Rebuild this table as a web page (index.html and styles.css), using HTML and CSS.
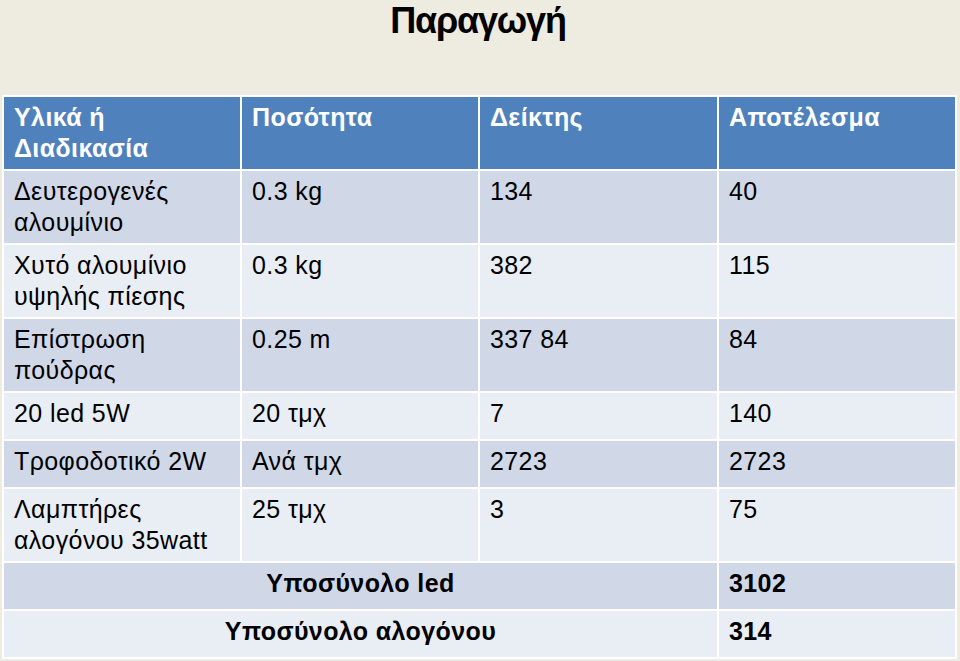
FILE: index.html
```html
<!DOCTYPE html>
<html lang="el">
<head>
<meta charset="utf-8">
<title>Παραγωγή</title>
<link rel="stylesheet" href="styles.css">
</head>
<body>
<div class="slide">
  <h1 class="title">Παραγωγή</h1>
  <table class="grid">
    <colgroup>
      <col class="c1"><col class="c2"><col class="c3"><col class="c4">
    </colgroup>
    <thead>
      <tr class="r-head">
        <th>Υλικά ή Διαδικασία</th>
        <th>Ποσότητα</th>
        <th>Δείκτης</th>
        <th>Αποτέλεσμα</th>
      </tr>
    </thead>
    <tbody>
      <tr class="dark r-tall">
        <td>Δευτερογενές αλουμίνιο</td><td>0.3 kg</td><td>134</td><td>40</td>
      </tr>
      <tr class="light r-tall">
        <td>Χυτό αλουμίνιο υψηλής πίεσης</td><td>0.3 kg</td><td>382</td><td>115</td>
      </tr>
      <tr class="dark r-tall">
        <td>Επίστρωση πούδρας</td><td>0.25 m</td><td>337 84</td><td>84</td>
      </tr>
      <tr class="light r-short">
        <td>20 led 5W</td><td>20 τμχ</td><td>7</td><td>140</td>
      </tr>
      <tr class="dark r-short">
        <td>Τροφοδοτικό 2W</td><td>Ανά τμχ</td><td>2723</td><td>2723</td>
      </tr>
      <tr class="light r-tall">
        <td>Λαμπτήρες αλογόνου 35watt</td><td>25 τμχ</td><td>3</td><td>75</td>
      </tr>
      <tr class="dark r-short total">
        <td colspan="3" class="center">Υποσύνολο led</td><td>3102</td>
      </tr>
      <tr class="light r-short total">
        <td colspan="3" class="center">Υποσύνολο αλογόνου</td><td>314</td>
      </tr>
    </tbody>
  </table>
</div>
</body>
</html>
```

FILE: styles.css
```css
html, body {
  margin: 0;
  padding: 0;
}
body {
  background: #eeebe0;
  font-family: "Liberation Sans", Arial, sans-serif;
  color: #000;
}
.slide {
  width: 960px;
  height: 661px;
  overflow: hidden;
  position: relative;
}
.title {
  margin: 0 0 0 -4px;
  height: 95px;
  box-sizing: border-box;
  padding-top: 0;
  text-align: center;
  font-family: "Liberation Sans", Arial, sans-serif;
  font-weight: bold;
  font-size: 36px;
  letter-spacing: -1.2px;
  line-height: 41px;
}
.grid {
  margin-left: 2px;
  border-collapse: collapse;
  table-layout: fixed;
  width: 953px;
  font-size: 25px;
  letter-spacing: 0.4px;
  line-height: 31px;
}
.c1 { width: 238px; }
.c2 { width: 238px; }
.c3 { width: 239px; }
.c4 { width: 238px; }
.grid th, .grid td {
  border: 2px solid #ffffff;
  padding: 5px 10px 0 10px;
  vertical-align: top;
  text-align: left;
  box-sizing: border-box;
}
.grid th {
  background: #4f81bd;
  color: #ffffff;
  font-weight: bold;
}
.r-head { height: 74px; }
.r-tall { height: 74px; }
.r-short { height: 48px; }
.dark td { background: #d0d8e8; }
.light td { background: #e9edf4; }
.total td { font-weight: bold; }
.grid td.center { text-align: center; }
```
